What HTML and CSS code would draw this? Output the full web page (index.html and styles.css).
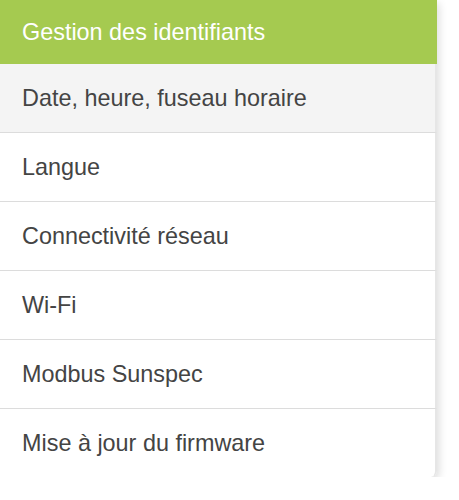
FILE: index.html
```html
<!DOCTYPE html>
<html lang="fr">
<head>
<meta charset="utf-8">
<link rel="stylesheet" href="styles.css">
</head>
<body>
<nav class="panel">
  <a class="item active">Gestion des identifiants</a>
  <a class="item hover">Date, heure, fuseau horaire</a>
  <a class="item">Langue</a>
  <a class="item">Connectivité réseau</a>
  <a class="item">Wi-Fi</a>
  <a class="item">Modbus Sunspec</a>
  <a class="item last">Mise à jour du firmware</a>
</nav>
</body>
</html>
```
FILE: styles.css
```css
html, body {
  margin: 0;
  padding: 0;
  background: #fff;
}
.panel {
  width: 437px;
  display: flex;
  flex-direction: column;
  background: #fff;
  border-bottom-right-radius: 6px;
  box-shadow: 2px 3px 8px rgba(0, 0, 0, 0.14);
  font-family: "Liberation Sans", Arial, Helvetica, sans-serif;
}
.item {
  display: flex;
  align-items: center;
  height: 68px;
  padding-left: 22px;
  font-size: 23.4px;
  color: #444;
  border-bottom: 1px solid #dcdcdc;
  border-right: 2px solid #e6e6e6;
}
.item.active {
  height: 64px;
  background: #a5ca50;
  color: #fff;
  border-bottom: none;
  border-right: none;
  padding-right: 0;
}
.item.hover {
  background: #f4f4f4;
}
.item.last {
  border-bottom: none;
  border-bottom-right-radius: 6px;
}
```
